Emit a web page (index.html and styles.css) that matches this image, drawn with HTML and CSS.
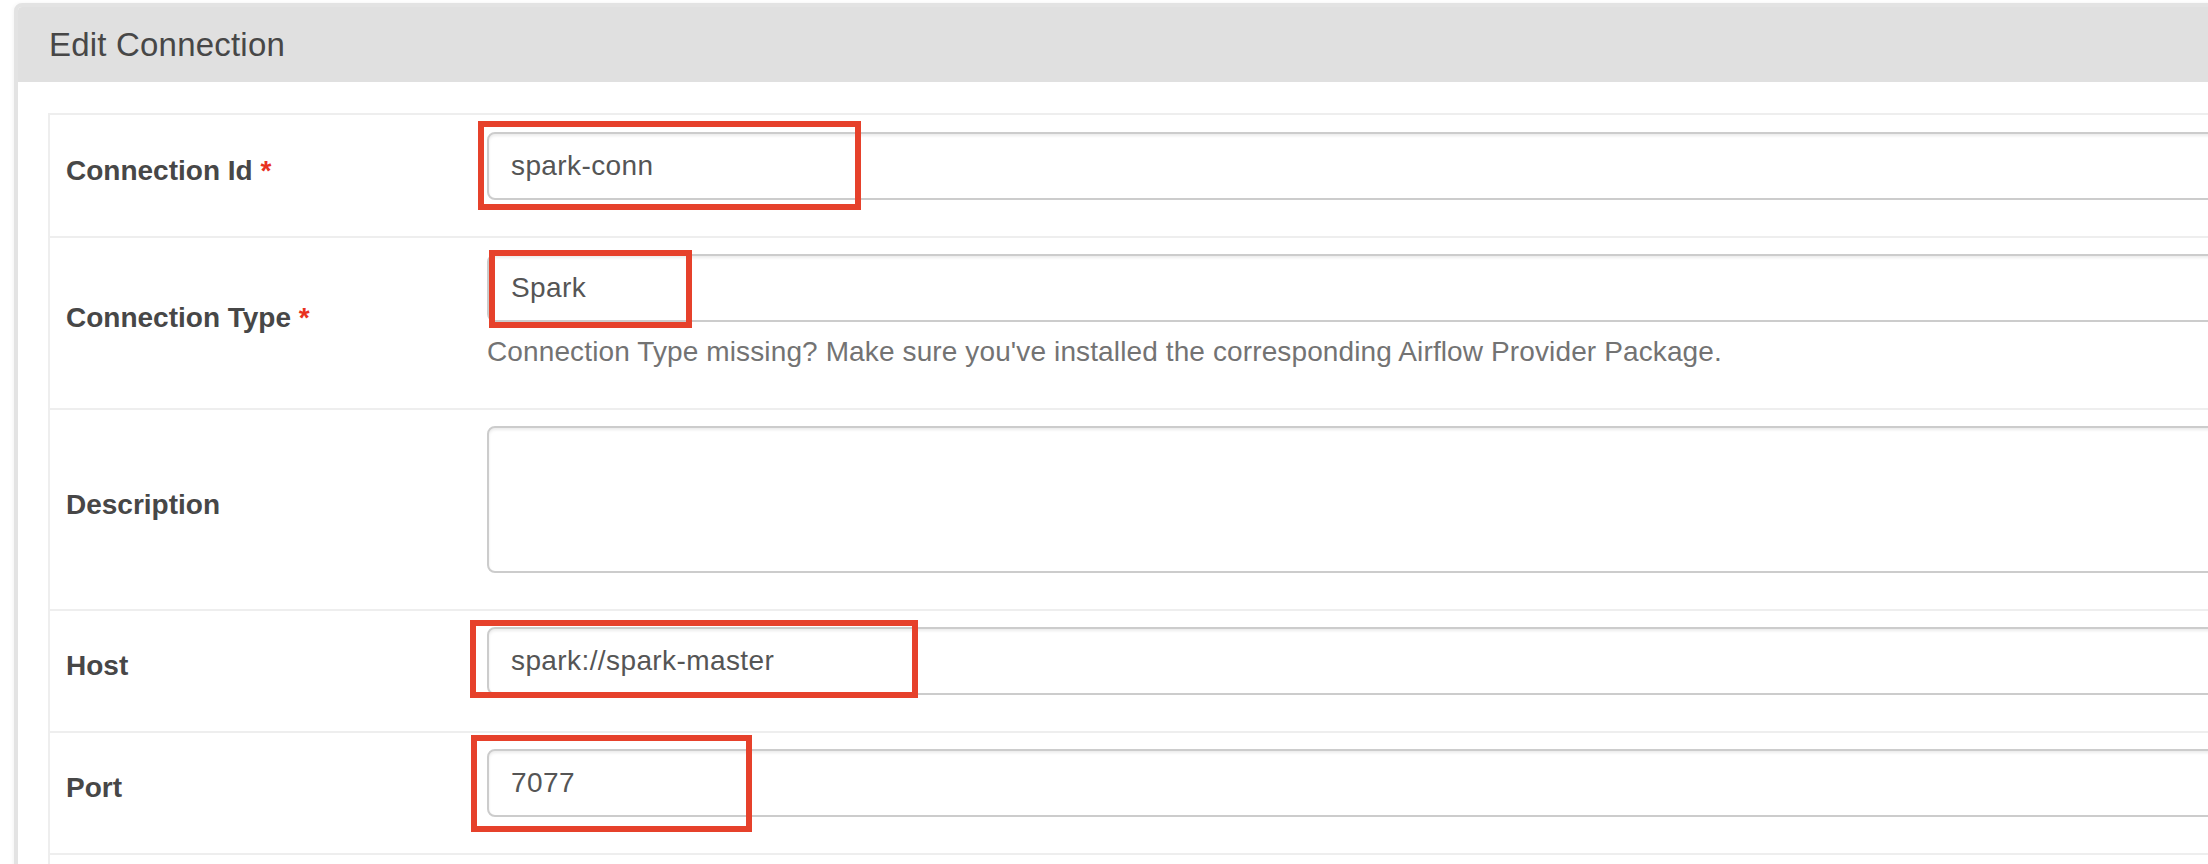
FILE: index.html
```html
<!DOCTYPE html>
<html lang="en">
<head>
<meta charset="utf-8">
<title>Edit Connection</title>
<link rel="stylesheet" href="styles.css">
</head>
<body>
<div class="page">
  <div class="panel">
    <div class="panel-heading">
      <h3 class="panel-title">Edit Connection</h3>
    </div>
    <div class="panel-body">
      <table class="form-table">
        <tr>
          <td class="label-cell"><label class="control-label">Connection Id <strong class="req">*</strong></label></td>
          <td class="value-cell">
            <div class="field">
              <input class="form-control" type="text" value="spark-conn">
              <span class="mark mark-id"></span>
            </div>
          </td>
        </tr>
        <tr>
          <td class="label-cell"><label class="control-label">Connection Type <strong class="req">*</strong></label></td>
          <td class="value-cell">
            <div class="field field-help">
              <div class="form-control select-like">Spark</div>
              <span class="mark mark-type"></span>
              <p class="help-block">Connection Type missing? Make sure you've installed the corresponding Airflow Provider Package.</p>
            </div>
          </td>
        </tr>
        <tr>
          <td class="label-cell"><label class="control-label">Description</label></td>
          <td class="value-cell">
            <div class="field">
              <textarea class="form-control textarea"></textarea>
            </div>
          </td>
        </tr>
        <tr>
          <td class="label-cell"><label class="control-label">Host</label></td>
          <td class="value-cell">
            <div class="field">
              <input class="form-control" type="text" value="spark://spark-master">
              <span class="mark mark-host"></span>
            </div>
          </td>
        </tr>
        <tr>
          <td class="label-cell"><label class="control-label">Port</label></td>
          <td class="value-cell">
            <div class="field">
              <input class="form-control" type="text" value="7077">
              <span class="mark mark-port"></span>
            </div>
          </td>
        </tr>
        <tr>
          <td class="label-cell"></td>
          <td class="value-cell">
            <div class="field">
              <input class="form-control" type="text" value="">
            </div>
          </td>
        </tr>
      </table>
    </div>
  </div>
</div>
</body>
</html>
```

FILE: styles.css
```css
html, body {
  margin: 0;
  padding: 0;
  background: #ffffff;
  overflow: hidden;
}

body {
  font-family: "Liberation Sans", Arial, Helvetica, sans-serif;
  color: #333333;
}

.page {
  padding: 3px 0 0 14px;
}

.panel {
  width: 2400px;
  border: 4px solid #e3e3e3;
  border-radius: 8px;
  background: #ffffff;
  box-shadow: 0 1px 5px rgba(0, 0, 0, 0.07);
}

.panel-heading {
  background: #e0e0e0;
  padding: 18px 31px;
  border-radius: 4px 4px 0 0;
}

.panel-title {
  margin: 0;
  font-size: 33px;
  line-height: 39px;
  font-weight: normal;
  letter-spacing: 0.2px;
  color: #474747;
}

.panel-body {
  padding: 31px 0 0 30px;
}

.form-table {
  border-collapse: separate;
  border-spacing: 0;
  width: 100%;
  border-left: 2px solid #eeeeee;
  border-top: 2px solid #eeeeee;
}

.form-table td {
  border-bottom: 2px solid #eeeeee;
  padding: 16px;
  vertical-align: top;
}

.form-table tr:first-child td {
  padding-top: 17px;
}

.label-cell {
  width: 389px;
  vertical-align: middle !important;
}

.control-label {
  display: inline-block;
  margin-bottom: 10px;
  font-size: 28px;
  line-height: 40px;
  font-weight: bold;
  color: #474747;
}

.req {
  color: #e8321f;
}

.field {
  position: relative;
  padding-bottom: 20px;
}

.form-control {
  display: block;
  box-sizing: border-box;
  width: 100%;
  height: 68px;
  margin: 0;
  padding: 12px 22px;
  font-family: "Liberation Sans", Arial, Helvetica, sans-serif;
  font-size: 28px;
  line-height: 40px;
  letter-spacing: 0.4px;
  color: #555555;
  background: #ffffff;
  border: 2px solid #cccccc;
  border-radius: 8px;
  box-shadow: inset 0 2px 3px rgba(0, 0, 0, 0.08);
  outline: none;
}

.textarea {
  height: 147px;
  resize: none;
}

.help-block {
  margin: 10px 0 0 0;
  font-size: 28px;
  line-height: 40px;
  letter-spacing: 0.12px;
  color: #737373;
}

.mark {
  position: absolute;
  box-sizing: border-box;
  border: 6px solid #e6412b;
  pointer-events: none;
}

.mark-id {
  left: -9px;
  top: -11px;
  width: 383px;
  height: 89px;
}

.mark-type {
  left: 2px;
  top: -4px;
  width: 203px;
  height: 78px;
}

.mark-host {
  left: -17px;
  top: -7px;
  width: 448px;
  height: 78px;
}

.mark-port {
  left: -16px;
  top: -14px;
  width: 281px;
  height: 97px;
}
```
